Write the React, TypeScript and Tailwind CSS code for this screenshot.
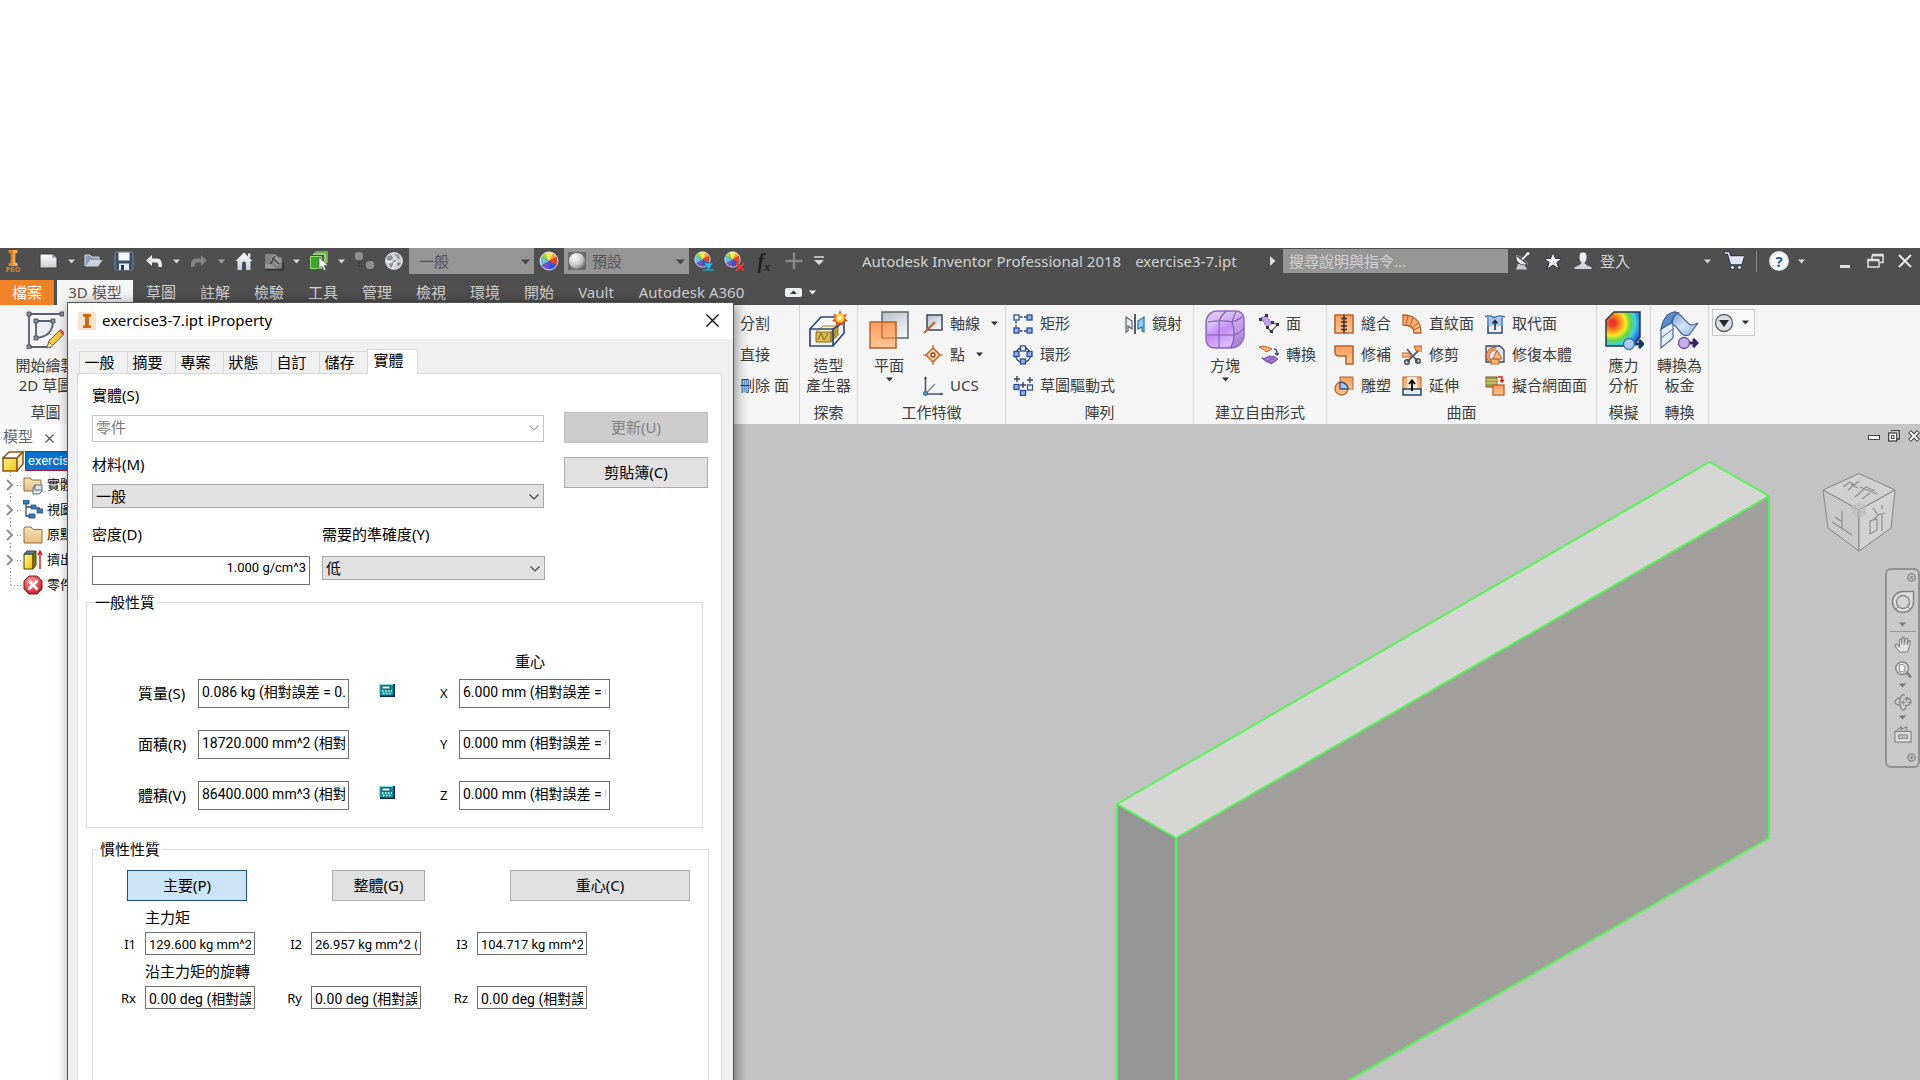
import type { ReactNode } from "react";

const UI = "font-['Noto_Sans','Noto_Sans_CJK_TC',sans-serif]";

/* ---------- shared pieces ---------- */

function Svg({ s = 20, vb = 20, children }: { s?: number; vb?: number; children: ReactNode }) {
  return (
    <svg width={s} height={s} viewBox={`0 0 ${vb} ${vb}`} fill="none" className="shrink-0" aria-hidden="true">
      {children}
    </svg>
  );
}

function Caret({ color = "#d8d8d8" }: { color?: string }) {
  return (
    <svg width="7" height="5" viewBox="0 0 7 5" className="shrink-0" aria-hidden="true">
      <path d="M0 0.5h7L3.5 4.5z" fill={color} />
    </svg>
  );
}

function Defs() {
  return (
    <svg width="0" height="0" className="absolute" aria-hidden="true">
      <defs>
        <linearGradient id="org" x1="0" y1="0" x2="0" y2="1">
          <stop offset="0" stopColor="#ff9d5c" />
          <stop offset="1" stopColor="#ffc695" />
        </linearGradient>
        <linearGradient id="gry" x1="0" y1="0" x2="0.6" y2="1">
          <stop offset="0" stopColor="#b9bec8" />
          <stop offset="1" stopColor="#f0f1f4" />
        </linearGradient>
        <linearGradient id="wht" x1="0" y1="0" x2="0" y2="1">
          <stop offset="0" stopColor="#ffffff" />
          <stop offset="1" stopColor="#c9ccd4" />
        </linearGradient>
        <linearGradient id="blu" x1="0" y1="0" x2="1" y2="1">
          <stop offset="0" stopColor="#6d9ad2" />
          <stop offset="0.5" stopColor="#d5e3f6" />
          <stop offset="1" stopColor="#8fb3e0" />
        </linearGradient>
        <linearGradient id="pur" x1="0" y1="0" x2="0.3" y2="1">
          <stop offset="0" stopColor="#e3d2f5" />
          <stop offset="0.45" stopColor="#cbaaf0" />
          <stop offset="1" stopColor="#ab85da" />
        </linearGradient>
        <linearGradient id="pur2" x1="0" y1="0" x2="0.5" y2="1">
          <stop offset="0" stopColor="#e9d4ff" />
          <stop offset="0.5" stopColor="#c48cf5" />
          <stop offset="1" stopColor="#d9b9fa" />
        </linearGradient>
        <linearGradient id="yel" x1="0" y1="0" x2="1" y2="1">
          <stop offset="0" stopColor="#fff6a0" />
          <stop offset="1" stopColor="#f2c200" />
        </linearGradient>
        <linearGradient id="fold" x1="0" y1="0" x2="0" y2="1">
          <stop offset="0" stopColor="#f9e2b8" />
          <stop offset="1" stopColor="#e8c080" />
        </linearGradient>
        <radialGradient id="ball" cx="0.35" cy="0.3" r="0.8">
          <stop offset="0" stopColor="#ffffff" />
          <stop offset="0.6" stopColor="#c8c8c8" />
          <stop offset="1" stopColor="#6d6d6d" />
        </radialGradient>
        <radialGradient id="heat" cx="0.2" cy="0.32" r="0.9">
          <stop offset="0.1" stopColor="#ee3a2c" />
          <stop offset="0.28" stopColor="#f99a1c" />
          <stop offset="0.42" stopColor="#f6ea25" />
          <stop offset="0.58" stopColor="#62d64a" />
          <stop offset="0.74" stopColor="#3bd0ea" />
          <stop offset="0.95" stopColor="#2b55c8" />
        </radialGradient>
        <radialGradient id="redb" cx="0.4" cy="0.3" r="0.8">
          <stop offset="0" stopColor="#ff9a9a" />
          <stop offset="1" stopColor="#c40d1c" />
        </radialGradient>
      </defs>
    </svg>
  );
}

function Wheel() {
  return (
    <>
      <path d="M10 10 10 1A9 9 0 0 1 17.8 5.5z" fill="#f4a03c" />
      <path d="M10 10 17.8 5.5A9 9 0 0 1 17.8 14.5z" fill="#e8432e" />
      <path d="M10 10 17.8 14.5A9 9 0 0 1 10 19z" fill="#3157d6" />
      <path d="M10 10 10 19A9 9 0 0 1 2.2 14.5z" fill="#7b4fd0" />
      <path d="M10 10 2.2 14.5A9 9 0 0 1 2.2 5.5z" fill="#63c2e0" />
      <path d="M10 10 2.2 5.5A9 9 0 0 1 10 1z" fill="#8fd34a" />
      <path d="M10 10 6 2A9 9 0 0 1 14 2z" fill="#f6ea55" />
      <circle cx="10" cy="10" r="9" stroke="#e4e4ea" strokeWidth="1" />
    </>
  );
}

/* ---------- title bar ---------- */

function Slot({ label, narrow, children }: { label: string; narrow?: boolean; children: ReactNode }) {
  return (
    <button
      type="button"
      aria-label={label}
      className={narrow ? "flex h-full w-[15px] shrink-0 items-center justify-center" : "flex h-full w-[30px] shrink-0 items-center justify-center"}
    >
      {children}
    </button>
  );
}

function TitleSelect({ label, value, icon }: { label: string; value: string; icon?: ReactNode }) {
  return (
    <div className="relative flex h-[26px] w-[125px] shrink-0 items-center bg-[#959595]">
      {icon && <span className="ml-1">{icon}</span>}
      <select aria-label={label} className={`h-full min-w-0 flex-1 appearance-none bg-transparent text-[15px] leading-[26px] text-[#555] ${icon ? "pl-[6px]" : "pl-[10px]"}`}>
        <option>{value}</option>
      </select>
      <span className="pointer-events-none absolute right-1 top-[11px]">
        <svg width="9" height="6" viewBox="0 0 9 6" aria-hidden="true"><path d="M0 .5h9L4.500 5.500z" fill="#484848" /></svg>
      </span>
    </div>
  );
}

function TitleBar() {
  return (
    <header className="flex h-8 shrink-0 bg-[#4f4f4f] pb-[6px] text-[#d2d2d2]">
      <div className="mr-[8px] flex w-[26px] shrink-0 flex-col items-center pt-[2px]">
        <svg width="14" height="18" viewBox="0 0 14 18" aria-hidden="true">
          <path d="M2 0h10v3l-2.500 1v10l2.500 1v3H2v-3l2.500-1V4L2 3z" fill="#e8821e" />
          <path d="M7 0h5v3l-2.500 1v10l2.500 1v3H7z" fill="#f6a94f" />
        </svg>
        <span className="text-[7px] font-bold leading-[8px] text-[#e8821e]">PRO</span>
      </div>
      <Slot label="新建">
        <Svg><path d="M1 3h12l5 4v10H1z" fill="url(#wht)" stroke="#3a3a3a" /><path d="M13 3v4h5" fill="#aaaeb8" /></Svg>
      </Slot>
      <Slot label="新建選項" narrow><Caret /></Slot>
      <Slot label="開啟">
        <Svg><path d="M1 15V4h5l2 2h7v3" fill="#8e9db5" stroke="#d3d9e3" /><path d="M1.500 15.500 6 9h12.500L14 15.500z" fill="#c9d1de" /></Svg>
      </Slot>
      <Slot label="儲存">
        <Svg><rect x="1" y="1" width="18" height="18" rx="1" fill="#3d4f6b" stroke="#7a889e" /><rect x="4.500" y="1.500" width="11" height="8" fill="#f4f6fa" /><rect x="5" y="12.500" width="10" height="6.500" fill="#e5e8ee" /><rect x="7" y="14" width="3" height="5" fill="#2a394f" /></Svg>
      </Slot>
      <Slot label="復原">
        <Svg><path d="M2 9.500 8 4v3.500h5c4 0 5 3 5 8.500h-3.500c0-3-.5-4.500-2.500-4.500H8V15z" fill="#ececec" /></Svg>
      </Slot>
      <Slot label="復原選項" narrow><Caret /></Slot>
      <Slot label="重做">
        <Svg><path d="M18 9.500 12 4v3.500H7c-4 0-5 3-5 8.500h3.500c0-3 .5-4.500 2.500-4.500h4V15z" fill="#858585" /></Svg>
      </Slot>
      <Slot label="重做選項" narrow><Caret color="#a0a0a0" /></Slot>
      <Slot label="首頁">
        <Svg><path d="M14 2.500h2.500v4H14z" fill="#dfe3ea" /><path d="M10 1.500 1.500 10h2v9h13v-9h2z" fill="url(#wht)" /><path d="M8 19v-6.500a2 2 0 0 1 4 0V19z" fill="#3d4a60" /></Svg>
      </Slot>
      <Slot label="回到草圖">
        <Svg><path d="M1 3h9v3H1z" fill="#858585" /><path d="M1 6h17v12H1z" fill="#808080" /><path d="m6 8 5-5 7 7-5 5z" fill="#9a9a9a" /><path d="m8 7 7 6M11 5l-5 9" stroke="#444" strokeWidth="1.500" /><path d="M1 13c5-1 8 1 11 5H1z" fill="#9a9a9a" /><path d="M1 18.500h18v-7" stroke="#2e2e2e" strokeWidth="1.500" /></Svg>
      </Slot>
      <Slot label="視圖選項" narrow><Caret /></Slot>
      <Slot label="選取">
        <Svg><path d="M6 1h12v11" stroke="#74d24f" strokeWidth="1.500" /><path d="M4 3h12v12" stroke="#b9efa0" strokeWidth="1.500" /><path d="M1.500 5.500h11v12h-11z" fill="#3fa62f" stroke="#8fe070" /><path d="M10 6v12l3-2.500 2 4 2-1-2-4h4z" fill="#fff" stroke="#555" strokeWidth=".7" /></Svg>
      </Slot>
      <Slot label="選取選項" narrow><Caret /></Slot>
      <Slot label="關係">
        <Svg><rect x="1" y="1" width="8" height="8" rx="3" fill="#8f8f8f" /><rect x="12" y="10" width="8" height="8" rx="3" fill="#8f8f8f" /><path d="M5 11v4h5" stroke="#2c2c2c" strokeDasharray="2 1" /></Svg>
      </Slot>
      <Slot label="外觀">
        <Svg><circle cx="10" cy="10" r="9" fill="#d3d5d9" /><path d="M3 6l4-2 2 3-3 3-3-1zM11 3l4 1 1 4-4-1zM13 10l4-1-1 5-3 1zM5 13l4-2 1 4-3 2zM9 8l3 1-1 3-3-1z" fill="#8b9098" /><path d="M2 10l6 1 5-6M8 18l2-6 7-2" stroke="#fff" /></Svg>
      </Slot>
      <TitleSelect label="材料" value="一般" />
      <Slot label="調整外觀"><Svg><Wheel /></Svg></Slot>
      <TitleSelect
        label="外觀設定"
        value="預設"
        icon={<Svg s={18}><rect width="20" height="20" fill="#6a6a6a" /><circle cx="10" cy="10" r="9" fill="url(#ball)" /></Svg>}
      />
      <Slot label="調整">
        <Svg><g transform="scale(.85)"><Wheel /></g><path d="M10 12h9l-3 4v2h-3v-2z" fill="#25c5ea" stroke="#0f7faa" strokeWidth=".8" /><path d="M9 19h11" stroke="#25c5ea" /></Svg>
      </Slot>
      <Slot label="清除">
        <Svg><g transform="scale(.85)"><Wheel /></g><path d="m12 12 8 8m0-8-8 8" stroke="#e83a30" strokeWidth="2" /></Svg>
      </Slot>
      <Slot label="參數">
        <span className="font-['Liberation_Serif',serif] text-[20px] font-bold italic leading-5 text-[#1f1f1f]">f<sub className="text-[13px]">x</sub></span>
      </Slot>
      <Slot label="加入"><Svg><path d="M10 1.500v17M1.500 10h17" stroke="#858585" strokeWidth="2.500" /></Svg></Slot>
      <button type="button" aria-label="自訂快速存取" className="flex h-full w-5 shrink-0 items-center justify-center">
        <svg width="12" height="10" viewBox="0 0 12 10" aria-hidden="true"><path d="M1 1h10" stroke="#ddd" strokeWidth="1.500" /><path d="M1 4h10L6 9z" fill="#ddd" /></svg>
      </button>
      <h1 className="ml-[33px] shrink-0 text-[15px] leading-[26px]">Autodesk Inventor Professional 2018</h1>
      <span className="ml-[14px] shrink-0 text-[15px] leading-[26px]">exercise3-7.ipt</span>
      <span className="min-w-0 flex-1" />
      <button type="button" aria-label="展開搜尋" className="flex w-5 shrink-0 items-center justify-center">
        <svg width="6" height="10" viewBox="0 0 6 10" aria-hidden="true"><path d="M0 0v10l5.500-5z" fill="#ddd" /></svg>
      </button>
      <input
        aria-label="搜尋"
        placeholder="搜尋說明與指令..."
        className="mt-px h-[24px] w-[225px] shrink-0 bg-[#959595] px-[6px] text-[15px] leading-[24px] placeholder:text-[#d0d0d0]"
      />
      <Slot label="通訊中心">
        <Svg><path d="M5 13 3 18.500h11L11 13z" fill="#c3c7d0" /><path d="M3 4.500C2 10 7 15.500 14.500 13.500z" fill="#f0f1f5" stroke="#2c303a" strokeWidth=".8" /><path d="M3 4.500c3-.5 11 5 11.500 9" stroke="#8e939f" /><path d="m9 8.500 6-6" stroke="#f0f1f5" strokeWidth="1.800" /><circle cx="15" cy="2.500" r="1.500" fill="#f0f1f5" /></Svg>
      </Slot>
      <Slot label="我的最愛">
        <Svg><path d="m10 1.500 2.500 6h6.500l-5.200 4 2 6.500-5.800-4-5.800 4 2-6.500L1 7.500h6.500z" fill="#f0f2f6" stroke="#333846" /></Svg>
      </Slot>
      <Slot label="使用者">
        <Svg><path d="M10 1c3 0 4 2 4 5s-1 4.500-2 5.500c0 2 2 2.500 7 4.500v2.500H1V16c5-2 7-2.500 7-4.500C7 10.500 6 9 6 6s1-5 4-5z" fill="url(#wht)" stroke="#333846" strokeWidth=".7" /></Svg>
      </Slot>
      <button type="button" className="ml-[2px] flex w-[111px] shrink-0 items-center justify-between text-[15px] leading-[26px]">
        登入 <Caret />
      </button>
      <span className="w-[8px] shrink-0" />
      <Slot label="購物車">
        <Svg><path d="M1 2h3.500l3 10.500H17L19 6H6" stroke="#20284a" strokeWidth="3" /><path d="M1 2h3.500l3 10.500H17L19 6H6" stroke="#e6e9f2" strokeWidth="1.500" /><path d="M6 6h13l-2 6H7.500z" fill="#dfe3ee" /><circle cx="8.500" cy="16.500" r="2" fill="#e6e9f2" stroke="#20284a" /><circle cx="15.500" cy="16.500" r="2" fill="#e6e9f2" stroke="#20284a" /></Svg>
      </Slot>
      <span className="mx-[7px] mt-[3px] h-[21px] w-px shrink-0 bg-[#8a8a8a]" />
      <Slot label="說明">
        <span className="flex size-5 items-center justify-center rounded-full border-2 border-[#dfe4ee] bg-white text-[15px] font-bold leading-4 text-[#2b5aa8]">?</span>
      </Slot>
      <Slot label="說明選項" narrow><Caret /></Slot>
      <span className="w-[21px] shrink-0" />
      <Slot label="最小化"><Svg><path d="M5 15.500h10" stroke="#e0e0e0" strokeWidth="3" /></Svg></Slot>
      <Slot label="還原"><Svg><path d="M7 4.500h11v7h-3M7 8V4.500M3 9h11v7H3z" stroke="#e0e0e0" strokeWidth="1.500" /><path d="M7 4h11.500M2.500 9H14" stroke="#e0e0e0" strokeWidth="2.500" /></Svg></Slot>
      <Slot label="關閉"><Svg><path d="m4 4 12 12M16 4 4 16" stroke="#e8e8e8" strokeWidth="2" /></Svg></Slot>
    </header>
  );
}

function RibbonTabs() {
  const tabs = ["草圖", "註解", "檢驗", "工具", "管理", "檢視", "環境", "開始"];
  return (
    <nav className="flex h-[25px] shrink-0 bg-[#4f4f4f] text-[15px] leading-[25px] text-[#cfcfcf]">
      <button type="button" className="w-[54px] bg-[#f08228] text-center text-white">檔案</button>
      <button type="button" className="ml-[3px] w-[76px] bg-[#f5f5f5] text-center text-[#555]">3D 模型</button>
      <span className="w-px" />
      {tabs.map((t) => (
        <button key={t} type="button" className="w-[54px] text-center">{t}</button>
      ))}
      <button type="button" className="w-[60px] text-center">Vault</button>
      <button type="button" className="w-[131px] text-center">Autodesk A360</button>
      <button type="button" aria-label="最小化功能區" className="ml-7 flex w-[17px] items-center justify-center">
        <svg width="17" height="9" viewBox="0 0 17 9" aria-hidden="true"><rect width="17" height="9" rx="2" fill="#eceef2" /><path d="M5 6h7L8.500 2.500z" fill="#333" /></svg>
      </button>
      <button type="button" aria-label="功能區選項" className="ml-[2px] flex w-4 items-center justify-center"><Caret color="#fff" /></button>
    </nav>
  );
}

/* ---------- ribbon ---------- */

const O = { fill: "url(#org)", stroke: "#b5622c" };
const B = { fill: "#8fb4ea", stroke: "#27489c", strokeWidth: 1.3 };

const icons: Record<string, ReactNode> = {
  axis: (<><rect x="4" y="1" width="15" height="15" fill="url(#gry)" stroke="#3d4657" strokeWidth="1.500" /><path d="m1 19 11-11" stroke="#c2622a" strokeWidth="2.200" /></>),
  point: (<><path d="M10 0v20M0 10h20" stroke="#b5622c" strokeWidth="1.200" /><path d="m10 3 7 7-7 7-7-7z" fill="#ffd3b0" stroke="#c2622a" strokeWidth="1.500" /><circle cx="10" cy="10" r="2" fill="#fff" stroke="#8c3f14" strokeWidth="1.300" /></>),
  ucs: (<><path d="M2.500 1v17H20" stroke="#4c5260" strokeWidth="1.500" /><path d="M2.500 18 12 8" stroke="#7d828e" strokeWidth="1.200" /><path d="M1 3 2.500 0 4 3zM17 16.500l3 1.500-3 1.500z" fill="#4c5260" /><circle cx="2.500" cy="17.500" r="2" fill="#4aa3df" stroke="#22679c" /></>),
  rect: (<><path d="M3 3h14M3 3v14M3 17h14" stroke="#333b4c" strokeDasharray="2.500 1.500" strokeWidth="1.300" /><rect x="1" y="1" width="5" height="5" fill="#fff" stroke="#27489c" strokeWidth="1.300" /><rect x="14" y="1" width="5" height="5" {...B} /><rect x="1" y="14" width="5" height="5" {...B} /><rect x="14" y="14" width="5" height="5" {...B} /></>),
  circ: (<><circle cx="10" cy="10" r="7.500" stroke="#333b4c" strokeWidth="1.300" /><rect x="7.500" y="1" width="5" height="5" fill="#fff" stroke="#27489c" strokeWidth="1.300" /><rect x="1" y="6.500" width="5" height="5" {...B} /><rect x="14" y="6.500" width="5" height="5" {...B} /><rect x="7.500" y="14" width="5" height="5" {...B} /></>),
  sketchdrv: (<><path d="M4 0v6M1 3h6M17 1v6M14 4h6M10 6v6M7 9h6" stroke="#3d4657" strokeWidth="1.400" /><rect x="1" y="8.500" width="5" height="5" {...B} /><rect x="14.500" y="9" width="5" height="5" fill="#fff" stroke="#27489c" strokeWidth="1.300" /><rect x="7.500" y="14.500" width="5" height="5" {...B} /></>),
  mirror: (<><path d="M10 0v20" stroke="#23282f" strokeWidth="1.500" /><path d="M1 3v15l2-1v-5l4 3V7z" fill="#e9eaee" stroke="#596070" strokeWidth="1.200" /><path d="M19 3v15l-2-1v-4l-4 2V7z" fill="#8fd0f4" stroke="#2377b5" strokeWidth="1.200" /></>),
  face: (<><path d="m2 4 5-2 6 7-5 4z" fill="#c6a4ea" stroke="#6b46a5" strokeDasharray="2 1" /><path d="m13 9 6 1-7 8-4-5" stroke="#6a7080" strokeWidth="1.300" /><path d="M0 4h3v3H0zM6 0h3v3H6zM12 7h3v3h-3zM17 9h3v3h-3zM11 16h3v3h-3zM7 12h3v3H7z" fill="#3a3350" /></>),
  convert: (<><path d="M0 2c5-2 9 0 13 2l-6 3C5 4 3 4 0 2z" {...O} /><path d="M3 13c4 1 6-2 8-2s6 1 8 3l-7 5c-2-2-6-2-9-6z" fill="#a77fd6" stroke="#6b46a5" /><path d="m5 14 9 4M9 12l8 4M16 12l-8 5" stroke="#7b55b5" strokeWidth=".8" /><path d="M15 4c3 0 3 2 3 5m-2-1 2 2 2-2" stroke="#3d4657" strokeWidth="1.300" /></>),
  stitch: (<><rect x="1" y="1" width="18" height="18" {...O} strokeWidth="1.500" /><path d="M10 1v18" stroke="#3b2b22" strokeWidth="1.500" /><path d="M7 4.500h6M7 8h6M7 12h6M7 15.500h6" stroke="#3b2b22" strokeWidth="1.500" /></>),
  patch: (<path d="M1 1h18v18h-7v-8H5c-3 0-4-2-4-4z" {...O} strokeWidth="1.500" />),
  sculpt: (<><rect x="6" y="1" width="13" height="12" {...O} /><circle cx="7.500" cy="12.500" r="6.500" {...O} strokeWidth="1.300" /><path d="M6 6.500c4-1 8 3 8 6.500H6z" fill="#a9c8f2" stroke="#2a59a5" strokeWidth="1.300" /></>),
  ruled: (<><path d="M1 1c11 0 18 6 18 18h-7c0-5-4-8-11-8z" {...O} strokeWidth="1.300" /><path d="M6 2 4 11M11 4 8 12M16 9l-6 5M18 13l-7 3" stroke="#b5622c" /></>),
  trim: (<><path d="M12 1h8v5h-6zM0 8h7l2 4H0z" {...O} /><path d="m5 4 11 13M16 6 5 17" stroke="#59606e" strokeWidth="1.800" /><circle cx="16" cy="16" r="2.300" stroke="#3d4657" strokeWidth="1.500" /><circle cx="5" cy="17" r="2.300" stroke="#3d4657" strokeWidth="1.500" /></>),
  extend: (<><rect x="1" y="1" width="18" height="12" {...O} /><path d="M5 1h10v12H5z" fill="#ffe9d6" /><rect x="1" y="13" width="18" height="6" fill="#e4eaf4" stroke="#2c4266" strokeWidth="1.500" /><path d="M10 15V6M7 8l3-3.500L13 8" stroke="#000" strokeWidth="1.800" /></>),
  replace: (<><path d="M0 3c5-4 7 2 11 0s6-1 9 0M3 3v9M17 3v9" stroke="#3f74c0" strokeWidth="1.500" /><rect x="4" y="4" width="12" height="8" fill="#a9c4ec" /><path d="M3 12v7h14v-7" fill="#edf1f8" stroke="#2c4266" strokeWidth="1.500" /><path d="M10 16V8M7.500 9.500 10 6.500l2.500 3" stroke="#1d2736" strokeWidth="1.500" /></>),
  repair: (<><path d="M1 1h14l4 4v12H1z" fill="#dbe5f3" stroke="#3d4657" strokeWidth="1.300" /><path d="M5 16A7 7 0 0 1 11 4" stroke="#b5622c" strokeWidth="3.500" /><path d="M5 16A7 7 0 0 1 11 4" stroke="#ffa467" strokeWidth="1.800" /><path d="m12 5 5 9H8z" {...O} /><rect x="6" y="14" width="8" height="5" {...O} /></>),
  mesh: (<><rect x="1" y="1" width="11" height="10" fill="#a99a44" stroke="#6e6222" /><path d="M1 4h11M1 7h11" stroke="#e1d88c" /><rect x="8" y="9" width="11" height="10" {...O} strokeWidth="1.300" /><path d="M13 1h4v5m-2-2 2 2 2-2" stroke="#d81e1e" strokeWidth="1.500" /></>),
};

function Tool({ icon, text, caret }: { icon: string; text: string; caret?: boolean }) {
  return (
    <button type="button" className="flex h-[31px] items-center whitespace-nowrap text-left">
      <Svg>{icons[icon]}</Svg>
      <span className="ml-[7px]">{text}</span>
      {caret && <span className="ml-[11px]"><Caret color="#333" /></span>}
    </button>
  );
}

function BigTool({ icon, lines, caret }: { icon: ReactNode; lines: string[]; caret?: boolean }) {
  return (
    <button type="button" className="flex shrink-0 flex-col items-center pt-[2px] text-center leading-5">
      <span className="mb-[5px] flex h-10 items-center">{icon}</span>
      {lines.map((l) => (
        <span key={l} className="whitespace-nowrap">{l}</span>
      ))}
      {caret && <span className="flex h-2 items-center"><Caret color="#333" /></span>}
    </button>
  );
}

function Panel({ title, className, children }: { title: string; className: string; children: ReactNode }) {
  return (
    <section className={`flex shrink-0 flex-col border-r border-[#d9d9d9] pt-[3px] ${className}`}>
      <div className="flex flex-1">{children}</div>
      <h2 className="pb-px text-center leading-[21px]">{title}</h2>
    </section>
  );
}

function Ribbon() {
  return (
    <div className="flex h-[119px] shrink-0 overflow-hidden bg-[#f5f5f5] text-[15px] text-[#3c3c3c]">
      <Panel title="草圖" className="w-[91px] pl-px">
        <div className="flex w-full justify-center">
          <BigTool
            lines={["開始繪製", "2D 草圖"]}
            icon={
              <Svg s={38} vb={38}>
                <path d="M3 3h33M3 3v33h22" stroke="#5b6070" strokeWidth="1.800" />
                <path d="M10 10h17c0 10-6 16-17 17z" fill="#eceef3" stroke="#5b6070" strokeWidth="1.800" />
                <path d="M1 1h4v4H1zM34 1h4v4h-4zM1 34h4v4H1zM8 8h4v4H8zM25 8h4v4h-4zM8 25h4v4H8z" fill="#8b92a3" stroke="#3d4250" strokeWidth=".8" />
                <path d="m21 37 2-7 11-11 4 4-11 11z" fill="#f7c948" stroke="#7c5312" />
                <path d="m34 19 4 4" stroke="#d45a4a" strokeWidth="3" />
                <path d="m21 37 2-6 4 4z" fill="#f6e3c6" stroke="#7c5312" strokeWidth=".6" />
              </Svg>
            }
          />
        </div>
      </Panel>
      <Panel title="修改" className="w-[709px] pr-3">
        <div className="ml-auto flex w-[47px] flex-col leading-[31px]">
          <button type="button" className="h-[31px] whitespace-nowrap text-left">分割</button>
          <button type="button" className="h-[31px] whitespace-nowrap text-left">直接</button>
          <button type="button" className="h-[31px] whitespace-nowrap text-left">刪除 面</button>
        </div>
      </Panel>
      <Panel title="探索" className="w-[58px]">
        <div className="flex w-full justify-center">
          <BigTool
            lines={["造型", "產生器"]}
            icon={
              <Svg s={40} vb={40}>
                <path d="M8 22h15v10H8z" fill="#dcb955" stroke="#8d6a14" />
                <path d="m8 22 7-6h15l-7 6z" fill="#f9f0c4" stroke="#a08538" />
                <path d="m23 22 7-6v9l-7 7z" fill="#c9a646" stroke="#8d6a14" />
                <path d="m10 30 3-7 3 7 4-7M25 29l3-9" stroke="#8d6a14" />
                <path d="M2 19h23v17H2zM2 19 13 7h15M25 19l11-7v11L25 36" stroke="#2f4674" strokeWidth="1.700" />
                <path d="m32 0 2 5 5-1-2 4 3 3-4 1v4l-4-2-4 2v-4l-4-1 3-3-2-4 5 1z" fill="#e2541d" />
                <circle cx="32" cy="8" r="4.500" fill="#ffd23a" />
                <circle cx="32" cy="8" r="2" fill="#fff6c8" />
              </Svg>
            }
          />
        </div>
      </Panel>
      <Panel title="工作特徵" className="w-[148px]">
        <div className="ml-[11px]">
          <BigTool
            caret
            lines={["平面"]}
            icon={
              <Svg s={40} vb={40}>
                <rect x="13" y="2" width="26" height="26" fill="url(#gry)" stroke="#5d626d" strokeWidth="1.500" />
                <rect x="1" y="12" width="26" height="26" fill="url(#org)" stroke="#b5622c" strokeWidth="1.500" />
                <path d="M13 12v16h14" stroke="#b5622c" strokeWidth="1.200" />
              </Svg>
            }
          />
        </div>
        <div className="ml-[14px]">
          <Tool icon="axis" text="軸線" caret />
          <Tool icon="point" text="點" caret />
          <Tool icon="ucs" text="UCS" />
        </div>
      </Panel>
      <Panel title="陣列" className="w-[188px]">
        <div className="ml-[7px]">
          <Tool icon="rect" text="矩形" />
          <Tool icon="circ" text="環形" />
          <Tool icon="sketchdrv" text="草圖驅動式" />
        </div>
        <div className="ml-[10px]"><Tool icon="mirror" text="鏡射" /></div>
      </Panel>
      <Panel title="建立自由形式" className="w-[133px]">
        <div className="ml-[11px]">
          <BigTool
            caret
            lines={["方塊"]}
            icon={
              <Svg s={40} vb={40}>
                <path d="M12 1h18c6 0 9 3 9 9v15c0 7-6 13-13 13H11C4 38 1 35 1 29V13C1 6 6 1 12 1z" fill="url(#pur)" stroke="#8d6cba" strokeWidth="1.500" />
                <path d="M3 17c0-4 2-6 6-6h11c5 0 8 2 8 7v12c0 5-2 7-7 7H10c-5 0-7-2-7-7z" fill="url(#pur2)" />
                <path d="M2 25h25c5 0 9-3 12-7M14 38V13c0-5 4-9 7-12M3 12c5-1 18-2 24 0 5-2 8-3 10-5M26 37c4-8 4-18 1-25 1-3 2-7 4-10" stroke="#7f5fae" strokeWidth="1.100" />
              </Svg>
            }
          />
        </div>
        <div className="ml-[14px]">
          <Tool icon="face" text="面" />
          <Tool icon="convert" text="轉換" />
        </div>
      </Panel>
      <Panel title="曲面" className="w-[270px]">
        <div className="ml-[7px] w-[68px]">
          <Tool icon="stitch" text="縫合" />
          <Tool icon="patch" text="修補" />
          <Tool icon="sculpt" text="雕塑" />
        </div>
        <div className="w-[83px]">
          <Tool icon="ruled" text="直紋面" />
          <Tool icon="trim" text="修剪" />
          <Tool icon="extend" text="延伸" />
        </div>
        <div>
          <Tool icon="replace" text="取代面" />
          <Tool icon="repair" text="修復本體" />
          <Tool icon="mesh" text="擬合網面面" />
        </div>
      </Panel>
      <Panel title="模擬" className="w-[54px]">
        <div className="flex w-full justify-center">
          <BigTool
            lines={["應力", "分析"]}
            icon={
              <Svg s={40} vb={40}>
                <path d="M2 10 10 2h26v25l-7 9H2z" fill="url(#heat)" stroke="#26364f" strokeWidth="1.500" />
                <path d="M30 34h9m-4-4 4 4-4 4" stroke="#17375e" strokeWidth="3" />
                <circle cx="25" cy="34" r="5.500" fill="#a8cdf0" stroke="#3f6ea8" strokeWidth="1.300" />
              </Svg>
            }
          />
        </div>
      </Panel>
      <Panel title="轉換" className="w-[58px]">
        <div className="flex w-full justify-center">
          <BigTool
            lines={["轉換為", "板金"]}
            icon={
              <Svg s={40} vb={40}>
                <path d="M2 19 14 11v17L2 38z" fill="#e6eef9" stroke="#4c6c9a" strokeWidth="1.200" />
                <path d="M2 28 14 19" stroke="#4c6c9a" />
                <path d="M2 19C4 9 9 3 15 2l4 1c-4 2-6 6-7 10z" fill="#5f8fcb" stroke="#3c5f92" strokeWidth="1.200" />
                <path d="M15 2c7-1 11 12 17 13 3 0 5-1 7-2l-9 12c-9 3-10-9-17-11C14 8 15 5 19 3z" fill="url(#blu)" stroke="#3c5f92" strokeWidth="1.200" />
                <path d="M29 33h9m-4-4 4 4-4 4" stroke="#35205c" strokeWidth="3" />
                <circle cx="25" cy="33" r="5.500" fill="#c7b0ea" stroke="#6b46a5" strokeWidth="1.300" />
              </Svg>
            }
          />
        </div>
      </Panel>
      <button type="button" aria-label="面板選項" className="ml-[3px] mt-1 flex h-[27px] w-[43px] items-center justify-center gap-2 border border-[#c9c9c9] bg-[#f9f9f9] pr-1">
        <Svg><circle cx="10" cy="10" r="8.500" fill="#dcdfe4" stroke="#5c6066" strokeWidth="1.300" /><path d="M5 7h10l-5 7z" fill="#23282f" /></Svg>
        <Caret color="#333" />
      </button>
    </div>
  );
}

/* ---------- model browser ---------- */

const treeIcons: ReactNode[] = [
  <><path d="M1 16V3h6l2 2h9v11z" fill="url(#fold)" stroke="#8a713d" /><path d="M12 10h7v6l-3 3h-6v-6z" fill="#dfe3ea" stroke="#5d6a80" /><path d="M12 10v5h7" stroke="#5d6a80" /></>,
  <><path d="M3 3v13h5M3 7h7M10 8h7" stroke="#39485e" strokeWidth="1.300" /><path d="M0 0h6v4H0zM8 5h5v4H8zM14 9h6v4h-6zM6 14h6v4H6z" fill="#3e7cc0" stroke="#1f4674" strokeWidth=".8" /></>,
  <path d="M1 18V3l1-1h6l2 2.500h9V18z" fill="url(#fold)" stroke="#8a713d" />,
  <><path d="M1 4h9v15H1z" fill="url(#yel)" stroke="#4d4300" /><path d="m1 4 3-3h9l-3 3z" fill="#4d86a8" stroke="#24465c" /><path d="m10 4 3-3v14l-3 4z" fill="#8a7a10" stroke="#4d4300" /><path d="M17 19V2m-2 3 2-4 2 4" stroke="#e02020" strokeWidth="1.500" /></>,
  <><path d="M6 1h8l5 5v8l-5 5H6l-5-5V6z" fill="url(#redb)" stroke="#7c1620" /><path d="m5.500 5.500 9 9m0-9-9 9" stroke="#fff" strokeWidth="2.800" /></>,
];

function ModelBrowser() {
  const rows = ["實體(1)", "視圖: 主要", "原點", "擠出1", "零件結束"];
  return (
    <aside className="w-[84px] shrink-0 overflow-hidden bg-white">
      <div className="flex h-[25px] items-center pl-[3px] text-[15px] text-[#666]">
        模型
        <button type="button" aria-label="關閉瀏覽器" className="ml-3 pt-1">
          <svg width="9" height="9" viewBox="0 0 9 9" aria-hidden="true"><path d="m.5.5 8 8m0-8-8 8" stroke="#555" strokeWidth="1.200" /></svg>
        </button>
      </div>
      <div className="mt-px flex h-[22px] items-center pl-[2px]">
        <Svg s={22} vb={22}><path d="M1 8h14v13H1z" fill="url(#yel)" stroke="#8a5a10" strokeWidth="1.500" /><path d="m1 8 6-6h14l-6 6z" fill="#fff" stroke="#8a5a10" strokeWidth="1.500" /><path d="m15 8 6-6v12l-6 7z" fill="#f5e7bd" stroke="#8a5a10" strokeWidth="1.500" /></Svg>
        <span className="ml-px h-5 min-w-0 flex-1 overflow-hidden border border-[#a01c3c] bg-[#0a72cf] pl-[2px] font-['Roboto','Noto_Sans_CJK_TC',sans-serif] text-[13px] leading-[18px] text-white">exercise3-7.ipt</span>
      </div>
      <ul className="text-[13px] text-black">
        {rows.map((r, i) => (
          <li key={r} className="flex h-[25px] items-center whitespace-nowrap">
            <svg width="23" height="25" viewBox="0 0 23 25" fill="none" className="shrink-0" aria-hidden="true">
              <path d={i === 4 ? "M10.500 0v13M11 13.500h10" : "M10.500 0v25M17 13.500h5"} stroke="#888" strokeDasharray="1 2" />
              {i < 4 && <path d="M5 5h10v15H5z" fill="#fff" />}
              {i < 4 && <path d="m7 8 5 5-5 5" stroke="#8f8f8f" strokeWidth="2" />}
            </svg>
            <Svg>{treeIcons[i]}</Svg>
            <span className="ml-1">{r}</span>
          </li>
        ))}
      </ul>
    </aside>
  );
}

/* ---------- 3D view ---------- */

function SolidDrawing() {
  return (
    <svg width="840" height="656" viewBox="1080 424 840 656" className="absolute right-0 top-0" fill="none" role="img" aria-label="實體模型">
      <path d="M1709.500 462 1769 496 1176 838 1117 804z" fill="#d6d7d4" />
      <path d="M1117 804 1176 838V1180H1117z" fill="#959595" />
      <path d="M1176 838 1769 496V838L1176 1180z" fill="#a09f9c" />
      <path d="M1117 1180V804L1709.500 462 1769 496V838L1176 1180V838L1769 496M1117 804l59 34" stroke="#57f357" strokeWidth="2" strokeLinejoin="round" />
      <g stroke="#858585">
        <path d="M1859 473.500 1895 490 1859 510 1823 490z" fill="#d0d0d0" />
        <path d="M1823 490 1859 510V551L1828 528z" fill="#c9c9c9" />
        <path d="M1895 490 1859 510V551L1891 528z" fill="#d2d2d2" />
      </g>
      <path d="m1852 506 7-4 7 3v10l-7 3-7-4z" fill="#bcbcbc" opacity=".7" />
      <g stroke="#909090" strokeWidth="1.200">
        <path d="m1843 487 7-5 4 3-6 5M1848 490l11-9M1851 484l7 4M1855 497l11-10 9 4M1860 487l17 7M1862 499l8-6" />
        <path d="M1832 522l20 13M1842 511v18M1842 522l-7-5" />
        <path d="M1870 521v13l7-4v-11zM1873 508l5 7 7-2M1882 505v4M1882 515v16M1878 515l-5 5" />
      </g>
    </svg>
  );
}

function NavBar() {
  const g = "#858585";
  const btn = "flex w-full items-center justify-center";
  return (
    <div className="absolute right-0 top-[144px] flex h-[200px] w-[35px] flex-col items-center rounded-md border-2 border-[#919191] bg-[#c9c9c9] pt-[3px]">
      <button type="button" aria-label="關閉導覽列" className="mr-[2px] self-end"><Svg s={9} vb={10}><circle cx="5" cy="5" r="4" stroke={g} strokeWidth="1.500" /><path d="m3.500 3.500 3 3m0-3-3 3" stroke={g} strokeWidth="1.200" /></Svg></button>
      <button type="button" aria-label="全導覽控制盤" className={`${btn} mt-2`}>
        <Svg s={24} vb={24}><path d="M12 1.500h10.500V12A10.500 10.500 0 1 1 12 1.500z" fill="#dcdcdc" stroke={g} strokeWidth="1.500" /><circle cx="12" cy="12" r="6.500" fill="#d4d4d4" stroke={g} strokeWidth="1.300" /><path d="m7 17-3 3M17 17l3 3" stroke={g} /></Svg>
      </button>
      <span className="mt-2"><Caret color="#777" /></span>
      <span className="mt-1 h-px w-[26px] bg-[#999]" />
      <button type="button" aria-label="平移" className={`${btn} mt-[4px]`}>
        <Svg s={18}><path d="M6 18c-2-3-4-5-5-8l2-1 3 3V4l2-.5.5 6L9 1.500h2l.5 8 1.500-7 2 .5-.5 7 2-5 1.500.5c0 5-1.500 8-3 12z" fill="#e3e3e3" stroke={g} strokeWidth="1.200" /></Svg>
      </button>
      <button type="button" aria-label="縮放" className={`${btn} mt-[7px]`}>
        <Svg s={18}><circle cx="9" cy="8" r="7" fill="#dcdcdc" stroke={g} strokeWidth="1.500" /><path d="M6 4h4l2 2v6H6z" fill="#f2f2f2" stroke={g} /><path d="m14 13 5 5" stroke={g} strokeWidth="3" /></Svg>
      </button>
      <span className="mt-1"><Caret color="#777" /></span>
      <button type="button" aria-label="環轉" className={`${btn} mt-[5px]`}>
        <Svg s={18}><path d="M6.500 13.500C3 13 1 12 1 10s3-4.500 6-4.500M13 5.500c4 .5 6 2.500 6 4.500s-3 4-7 4" stroke={g} strokeWidth="1.300" /><path d="M12 2.500c-2-2-5 0-5.500 6S8 19 10 19s3-2 3.500-4" stroke={g} strokeWidth="1.300" /><path d="M10 8v5M7.500 10.500h5M14 4v5M11.500 6.500h5M15 10.500h4" stroke={g} /></Svg>
      </button>
      <span className="mt-1"><Caret color="#777" /></span>
      <button type="button" aria-label="視面" className={`${btn} mt-[5px]`}>
        <Svg s={18}><path d="M1 7h18v12H1z" fill="#dadada" stroke={g} strokeWidth="1.300" /><path d="M5 11h10v4H5z" fill="#bbb" stroke={g} /><path d="M3 6 8 2v3l6-3v4" stroke={g} strokeWidth="1.200" /></Svg>
      </button>
      <button type="button" aria-label="自訂導覽列" className="mb-1 mr-[2px] mt-auto self-end"><Svg s={9} vb={10}><circle cx="5" cy="5" r="4" stroke={g} strokeWidth="1.500" /><path d="M3 4h4M3.500 6h3" stroke={g} strokeWidth="1.200" /></Svg></button>
    </div>
  );
}

function Viewport() {
  return (
    <main className="relative flex-1 overflow-hidden bg-[#c3c3c3]">
      <SolidDrawing />
      <div className="absolute right-0 top-[6px] flex items-center gap-2">
        <button type="button" aria-label="最小化視窗"><Svg s={12} vb={12}><rect x=".5" y="5.500" width="11" height="4" fill="#fff" stroke="#444" /></Svg></button>
        <button type="button" aria-label="還原視窗"><Svg s={12} vb={12}><path d="M3 .7h8.300V9H9" stroke="#444" strokeWidth="1.300" fill="#eee" /><rect x=".7" y="3" width="8" height="8" fill="#fff" stroke="#444" strokeWidth="1.300" /><rect x="3.500" y="5.500" width="2.500" height="3" stroke="#444" /></Svg></button>
        <button type="button" aria-label="關閉視窗"><Svg s={12} vb={12}><path d="m1.500 1.500 9 9m0-9-9 9" stroke="#444" strokeWidth="4" /><path d="m2 2 8 8m0-8-8 8" stroke="#fff" strokeWidth="1.800" /></Svg></button>
      </div>
      <NavBar />
    </main>
  );
}

/* ---------- iProperty dialog ---------- */

function Select({ id, value, className, disabled }: { id: string; value: string; className: string; disabled?: boolean }) {
  return (
    <div className={`relative ${className}`}>
      <select
        id={id}
        disabled={disabled}
        className={
          disabled
            ? "block h-[27px] w-full appearance-none border border-[#c6c6c6] bg-white pb-1 pl-[3px] text-[15px] leading-5 text-[#777] opacity-100"
            : "block h-6 w-full appearance-none border border-[#a8a8a8] bg-[#e1e1e1] pl-[3px] text-[15px] leading-5 text-black"
        }
      >
        <option>{value}</option>
      </select>
      <svg width="10" height="6" viewBox="0 0 10 6" fill="none" className="pointer-events-none absolute right-[5px] top-[10px]" aria-hidden="true">
        <path d="m.5.5 4.500 4.500L9.500.5" stroke={disabled ? "#aaa" : "#444"} strokeWidth="1.200" />
      </svg>
    </div>
  );
}

const field = "block border border-[#6f6f6f] bg-white px-[3px] font-['Roboto','Noto_Sans_CJK_TC',sans-serif] text-black";

function Button({ className, children, primary, disabled }: { className: string; children: ReactNode; primary?: boolean; disabled?: boolean }) {
  const tone = primary
    ? "border-[#1c517f] bg-[#cce4f7] text-black"
    : disabled
      ? "border-[#bfbfbf] bg-[#cccccc] text-[#838383]"
      : "border-[#adadad] bg-[#e1e1e1] text-black";
  return (
    <button type="button" disabled={disabled} className={`h-[31px] border text-center text-[15px] leading-[27px] ${tone} ${className}`}>
      {children}
    </button>
  );
}

function Calc() {
  return (
    <svg width="16" height="13" viewBox="0 0 16 13" aria-hidden="true">
      <path d="M1 0h15v13H1z" fill="#08205c" />
      <rect width="14.500" height="11.500" rx="1" fill="#17949b" />
      <path d="M.5 11V.5H14" stroke="#7be0e0" fill="none" />
      <rect x="3" y="2" width="8" height="3" fill="#d8f6f6" stroke="#053b52" strokeWidth=".8" />
      <path d="M3 7h1.500M6 7h1.500M9 7h1.500M12 7h1M4 9.500h1.500M7 9.500h1.500M10 9.500h1.500" stroke="#e5ffff" strokeWidth="1.300" />
    </svg>
  );
}

function GeneralRow({ id, label, value, axis, center, calc }: { id: string; label: string; value: string; axis: string; center: string; calc?: boolean }) {
  return (
    <div className="flex items-start">
      <label htmlFor={id} className="w-[60px] pt-1">{label}</label>
      <input id={id} readOnly defaultValue={value} className={`${field} h-[29px] w-[151px] pb-[5px] text-[14px]`} />
      <span className="ml-[30px] w-[61px] pt-[5px]">{calc && <Calc />}</span>
      <label htmlFor={`${id}-${axis}`} className="w-[19px] pt-1 text-[13px]">{axis}</label>
      <input id={`${id}-${axis}`} readOnly defaultValue={center} className={`${field} h-[29px] w-[151px] pb-[5px] text-[14px]`} />
    </div>
  );
}

function InertiaRow({ items, size }: { items: [string, string][]; size: string }) {
  return (
    <div className="flex pl-[27px]">
      {items.map(([k, v]) => (
        <div key={k} className="flex w-[166px] items-center">
          <label htmlFor={k} className="w-[25px] pr-[9px] text-right text-[13px]">{k}</label>
          <input id={k} readOnly defaultValue={v} className={`${field} h-[23px] w-[110px] ${size}`} />
        </div>
      ))}
    </div>
  );
}

function PropertyDialog() {
  return (
    <div role="dialog" aria-label="exercise3-7.ipt iProperty" className="absolute left-[67px] top-[54px] h-[900px] w-[667px] border border-[#555] bg-[#f0f0f0] text-[15px] leading-5 text-black shadow-[2px_2px_12px_rgba(0,0,0,0.45)]">
      <div className="flex h-9 items-center bg-white pb-px pl-[10px]">
        <Svg s={18} vb={18}><rect width="18" height="18" fill="#fbe3cc" /><path d="M5 2h8v2.500l-2 .5v8l2 .5V16H5v-2.500l2-.5V5l-2-.5z" fill="#c8691a" /></Svg>
        <span className="ml-[6px] pb-px">exercise3-7.ipt iProperty</span>
        <button type="button" aria-label="關閉" className="ml-auto mr-[14px]">
          <svg width="13" height="13" viewBox="0 0 13 13" aria-hidden="true"><path d="m.5.5 12 12m0-12-12 12" stroke="#000" strokeWidth="1.200" /></svg>
        </button>
      </div>
      <div className="flex h-[34px] items-end pl-[11px]" role="tablist">
        {["一般", "摘要", "專案", "狀態", "自訂", "儲存"].map((t) => (
          <button key={t} type="button" role="tab" aria-selected="false" className="h-[22px] w-12 border border-r-0 border-b-0 border-[#d9d9d9] pb-px pr-2 text-center">{t}</button>
        ))}
        <button type="button" role="tab" aria-selected="true" className="relative -mb-px h-[25px] w-[51px] border border-b-0 border-[#d9d9d9] bg-white pb-1 pr-2 text-center">實體</button>
      </div>
      <div role="tabpanel" className="mx-[9px] mr-[11px] flex h-[820px] flex-col border border-[#d9d9d9] bg-white pl-2">
        <div className="flex pl-[6px] pt-[11px]">
          <div className="w-[472px]">
            <label htmlFor="solid" className="block">實體(S)</label>
            <Select id="solid" value="零件" disabled className="mt-[10px] w-[452px]" />
            <label htmlFor="material" className="mt-3 block">材料(M)</label>
            <Select id="material" value="一般" className="mt-[10px] w-[452px]" />
          </div>
          <div className="flex w-36 flex-col gap-[14px] pt-[27px]">
            <Button disabled className="w-full">更新(U)</Button>
            <Button className="w-full">剪貼簿(C)</Button>
          </div>
        </div>
        <div className="mt-4 flex gap-3 pl-[6px]">
          <div className="w-[218px]">
            <label htmlFor="density" className="block">密度(D)</label>
            <input id="density" readOnly defaultValue="1.000 g/cm^3" className={`${field} mt-3 h-[29px] w-full pb-[6px] text-right text-[13px]`} />
          </div>
          <div className="w-[223px]">
            <label htmlFor="accuracy" className="block">需要的準確度(Y)</label>
            <Select id="accuracy" value="低" className="mt-3" />
          </div>
        </div>
        <fieldset className="mt-[7px] h-[236px] w-[617px] border border-[#dcdcdc]">
          <legend className="ml-[6px] px-[2px]">一般性質</legend>
          <div className="pl-[51px] pt-[39px]">
            <div className="pl-[377px]">重心</div>
            <div className="mt-2 flex flex-col gap-[22px]">
              <GeneralRow id="mass" label="質量(S)" value="0.086 kg (相對誤差 = 0.001157%)" axis="X" center="6.000 mm (相對誤差 = 0.000%)" calc />
              <GeneralRow id="area" label="面積(R)" value="18720.000 mm^2 (相對誤差 = 0.000%)" axis="Y" center="0.000 mm (相對誤差 = 0.000%)" />
              <GeneralRow id="volume" label="體積(V)" value="86400.000 mm^3 (相對誤差 = 0.001%)" axis="Z" center="0.000 mm (相對誤差 = 0.000%)" calc />
            </div>
          </div>
        </fieldset>
        <fieldset className="ml-[6px] mt-[11px] h-[300px] w-[617px] border border-[#dcdcdc]">
          <legend className="ml-[5px] px-[2px]">慣性性質</legend>
          <div className="flex pl-[34px] pt-[11px]">
            <Button primary className="w-[120px]">主要(P)</Button>
            <Button className="ml-[85px] w-[93px]">整體(G)</Button>
            <Button className="ml-[85px] w-[180px]">重心(C)</Button>
          </div>
          <div className="mb-[5px] mt-[6px] pl-[52px]">主力矩</div>
          <InertiaRow size="text-[13px]" items={[["I1", "129.600 kg mm^2 (相對誤差)"], ["I2", "26.957 kg mm^2 (相對誤差)"], ["I3", "104.717 kg mm^2 (相對誤差)"]]} />
          <div className="mb-[5px] mt-[6px] pl-[52px]">沿主力矩的旋轉</div>
          <InertiaRow size="text-[14px]" items={[["Rx", "0.00 deg (相對誤差 = 0.000%)"], ["Ry", "0.00 deg (相對誤差 = 0.000%)"], ["Rz", "0.00 deg (相對誤差 = 0.000%)"]]} />
        </fieldset>
      </div>
    </div>
  );
}

export default function App() {
  return (
    <div className={`flex h-screen flex-col overflow-hidden bg-white pt-[248px] ${UI}`}>
      <Defs />
      <div className="relative flex min-h-0 flex-1 flex-col overflow-hidden">
        <TitleBar />
        <RibbonTabs />
        <Ribbon />
        <div className="flex min-h-0 flex-1">
          <ModelBrowser />
          <Viewport />
        </div>
        <PropertyDialog />
      </div>
    </div>
  );
}
